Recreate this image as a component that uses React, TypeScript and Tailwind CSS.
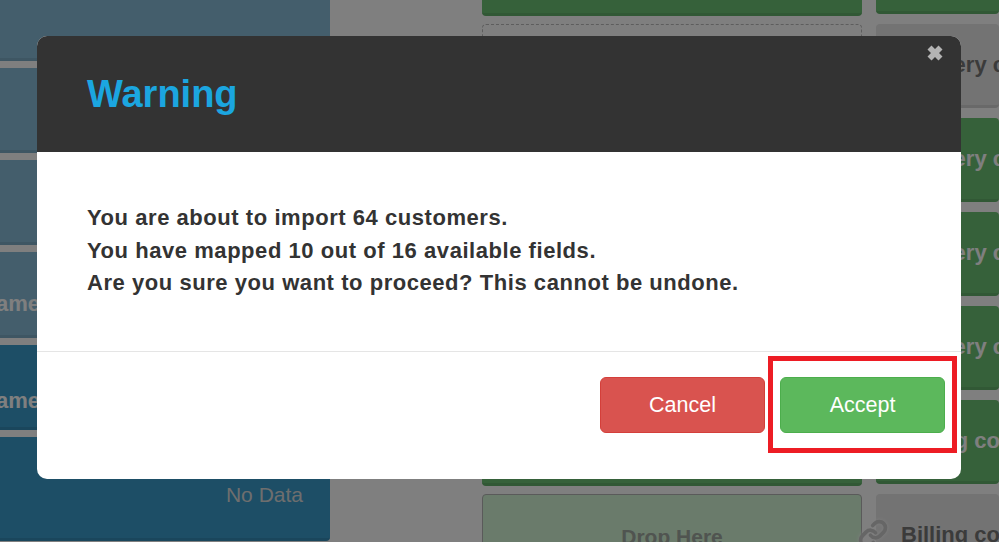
import React from "react";
import { Link } from "lucide-react";

const sans = "font-['Liberation_Sans',Arial,sans-serif]";

function RightTile({ tone, label }: { tone: "gray" | "green"; label: string }) {
  const colors =
    tone === "gray"
      ? "bg-[#e6e6e6] border-[#d2d2d2] text-[#777777]"
      : "bg-[#6cc274] border-[#62b06a] text-white";
  return (
    <div className={`h-[84px] shrink-0 rounded border-b-[3px] ${colors} flex items-center pl-[25px] text-[22px] font-bold whitespace-nowrap`}>
      {label}
    </div>
  );
}

const green = "h-[86px] shrink-0 rounded border-b-[3px] border-[#62b06a] bg-[#6cc274]";
const pale = "h-[85.4px] shrink-0 rounded-b border-b-[3px] border-[#7cacc6] bg-[#88bdd9]";
const blue = "shrink-0 rounded-b border-b-[3px] border-[#348cb8] bg-[#3a9ccc]";

export default function App() {
  return (
    <div className={`relative h-[542px] w-[999px] overflow-hidden bg-white ${sans}`}>
      {/* page behind the dialog */}
      <div className="flex h-full">
        <div className="-ml-[10px] -mt-[24.9px] flex w-[340px] shrink-0 flex-col gap-[7px]">
          <div className={pale} />
          <div className={pale} />
          <div className={pale} />
          <div className={`${pale} pl-[6px] pt-[40px] text-[22px] leading-[24px] font-bold text-white`}>ame</div>
          <div className={`${blue} h-[85.4px] pl-[6px] pt-[44px] text-[22px] leading-[24px] font-bold text-white`}>ame</div>
          <div className={`${blue} h-[104px] pr-[27px] pt-[46px] text-right text-[21px] leading-[24px] text-[#dddddd]`}>No Data</div>
        </div>
        <div className="ml-[152px] flex w-[380px] shrink-0 flex-col gap-[8px]">
          <div className={`-mt-[70px] ${green}`} />
          <div className="h-[86px] shrink-0 rounded border border-dashed border-[#bbbbbb]" />
          <div className={green} />
          <div className={green} />
          <div className={green} />
          <div className={green} />
          <div className="flex h-[86px] shrink-0 items-center justify-center rounded border border-[#b4b4b4] bg-[#d4f6d6] text-[21px] font-bold text-[#a0a8a0]">
            Drop Here
          </div>
        </div>
        <div className="ml-[14px] flex min-w-0 flex-1 flex-col gap-[10px] overflow-hidden">
          <div className="-mt-[70px] h-[84px] shrink-0 rounded border-b-[3px] border-[#62b06a] bg-[#6cc274]" />
          <RightTile tone="gray" label="Delivery country" />
          <RightTile tone="green" label="Delivery country" />
          <RightTile tone="green" label="Delivery country" />
          <RightTile tone="green" label="Delivery country" />
          <RightTile tone="green" label="Billing country" />
          <RightTile tone="gray" label="Billing country" />
        </div>
      </div>

      {/* link icon over the tile boundary */}
      <Link strokeWidth={3} className="absolute left-[858px] top-[519px] h-[30px] w-[30px] text-[#cccccc] drop-shadow-[0_0_2px_white]" />

      {/* overlay */}
      <div className="absolute inset-0 bg-black/50" />

      {/* dialog */}
      <div className="absolute left-[37px] top-[36px] flex h-[443px] w-[924px] flex-col overflow-hidden rounded-[10px] bg-white">
        <div className="relative h-[116px] shrink-0 bg-[#333333] pl-[50px] pt-[36px]">
          <h1 className="text-[38px] leading-[44px] font-bold text-[#1ba6e0]">Warning</h1>
          <svg className="absolute right-[18px] top-[9px] h-[16px] w-[16px]" viewBox="0 0 16 16" fill="#b4b4b4">
            <path d="M4.5 0.5 8 4 11.5 0.5 15.5 4.5 12 8 15.5 11.5 11.5 15.5 8 12 4.5 15.5 0.5 11.5 4 8 0.5 4.5Z" />
          </svg>
        </div>
        <div className="h-[200px] shrink-0 border-b border-[#e5e5e5] pl-[50px] pt-[50.4px] text-[22px] leading-[32.5px] font-bold tracking-[0.55px] text-[#333333]">
          <p>You are about to import 64 customers.</p>
          <p>You have mapped 10 out of 16 available fields.</p>
          <p>Are you sure you want to proceed? This cannot be undone.</p>
        </div>
        <div className="flex justify-end gap-[15px] pr-[16px] pt-[25px]">
          <button className="h-[56px] w-[165px] rounded-md border border-[#d43f3a] bg-[#d9534f] text-[21.5px] text-white">Cancel</button>
          <button className="h-[56px] w-[165px] rounded-md border border-[#4cae4c] bg-[#5cb85c] text-[21.5px] text-white">Accept</button>
        </div>
      </div>

      {/* red highlight around the accept button */}
      <div className="absolute left-[768px] top-[356px] h-[97px] w-[189px] border-[5px] border-[#ed1c24]" />
    </div>
  );
}
